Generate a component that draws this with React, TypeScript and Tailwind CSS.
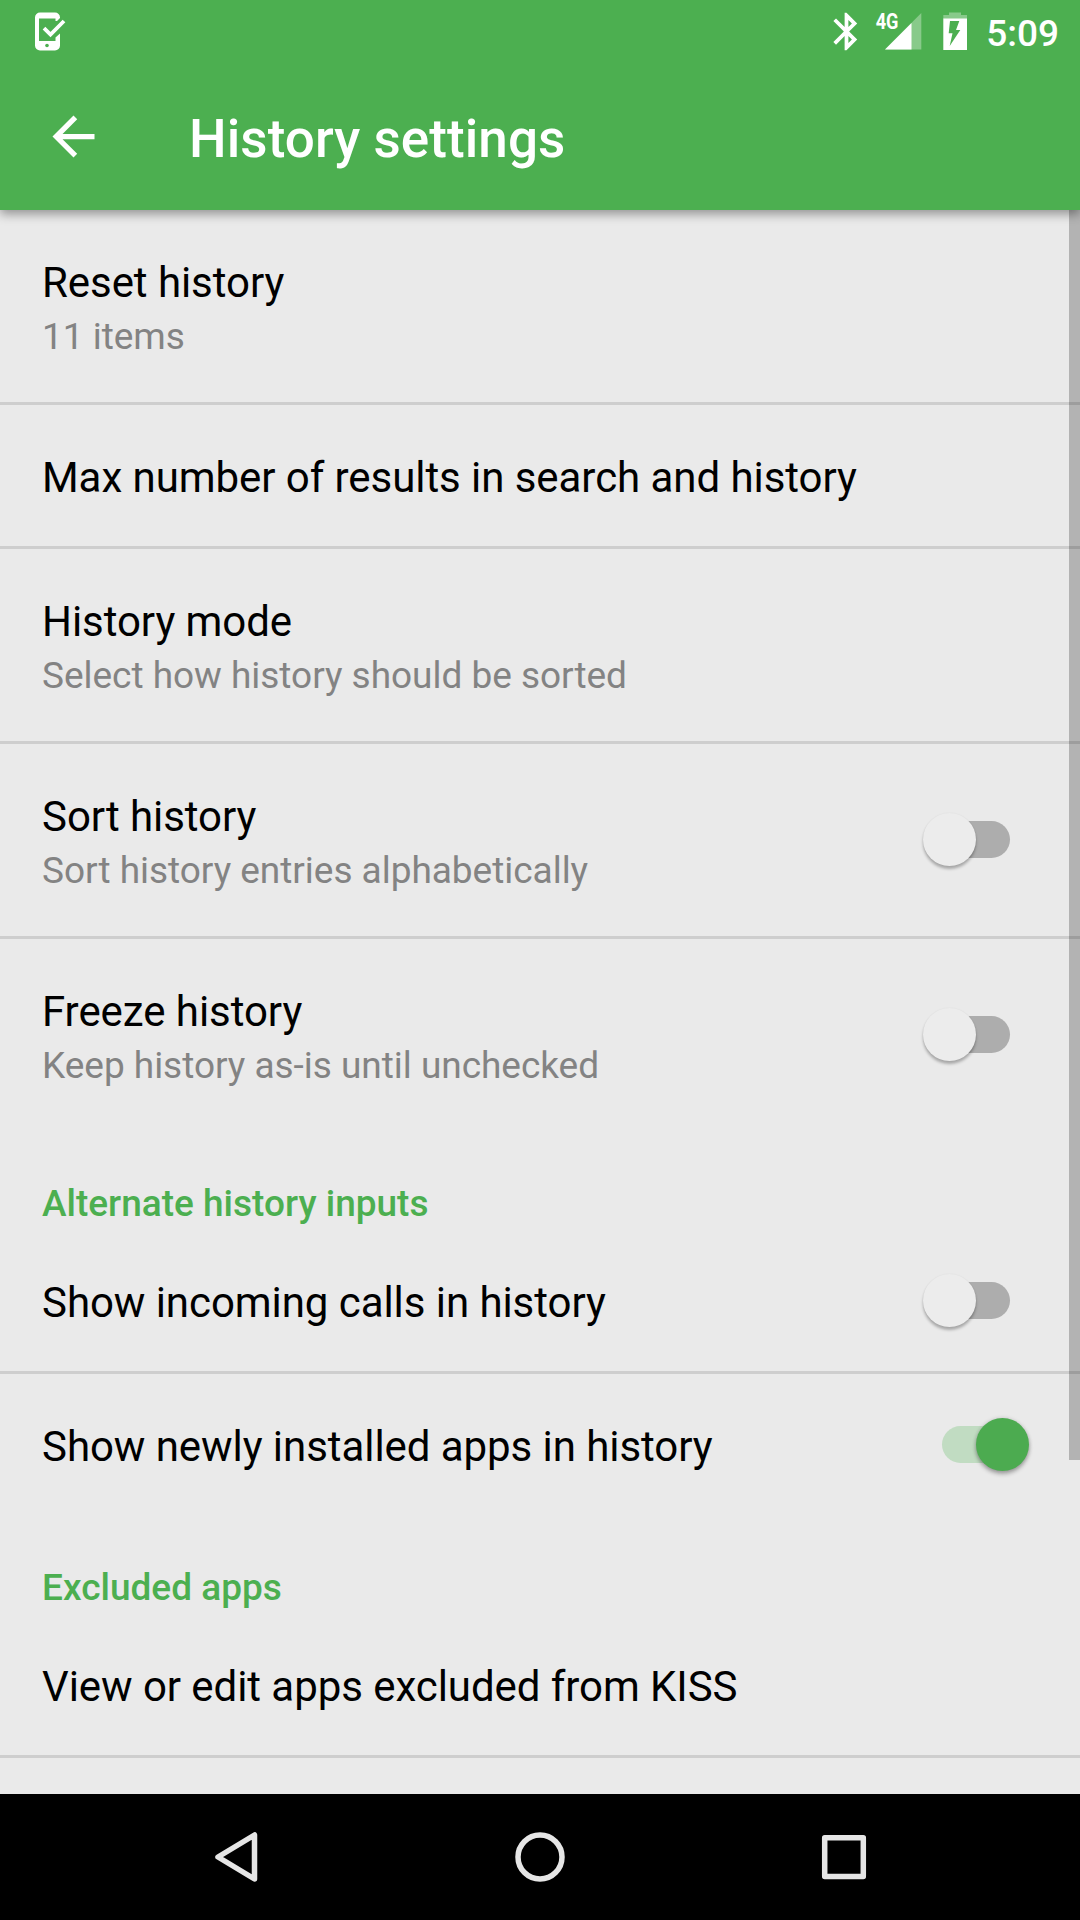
import React from "react";
import { MdArrowBack, MdBluetooth } from "react-icons/md";

function Switch({ on = false, raised = false }: { on?: boolean; raised?: boolean }) {
  return (
    <div className={`relative mr-[51px] h-[53px] w-[106px] shrink-0 ${raised ? "mb-[2px]" : ""}`}>
      <div className={`absolute left-[19px] top-[8px] h-[37px] w-[68px] rounded-full ${on ? "bg-[#c1dcc2]" : "bg-[#adadad]"}`} />
      <div
        className={`absolute top-0 h-[53px] w-[53px] rounded-full ${
          on
            ? "left-[53px] bg-[#4cab50] shadow-[0_3px_4px_rgba(0,0,0,0.3),0_0_4px_rgba(0,0,0,0.14)]"
            : "left-0 bg-[#ececec] shadow-[0_3px_3px_rgba(0,0,0,0.28),0_0_2px_rgba(0,0,0,0.06)]"
        }`}
      />
    </div>
  );
}

type RowProps = { title: string; summary?: string; toggle?: "on" | "off"; divider?: boolean };

function Row({ title, summary, toggle, divider = true }: RowProps) {
  return (
    <div className={divider ? "border-b-[3px] border-[#cecece]" : ""}>
      <div className={`flex items-center justify-between pl-[42px] ${summary ? "h-[192px]" : "h-[141px]"}`}>
        <div className="whitespace-nowrap pt-[4px]">
          <div className="text-[42px] leading-[56px] tracking-[-0.06px] text-black">{title}</div>
          {summary && <div className="-mb-px mt-px text-[37px] leading-[50px] tracking-[-0.03px] text-[#838383]">{summary}</div>}
        </div>
        {toggle && <Switch on={toggle === "on"} raised={!!summary} />}
      </div>
    </div>
  );
}

function Category({ children }: { children: React.ReactNode }) {
  return (
    <div className="flex h-[99px] items-end pb-px pl-[42px] text-[37px] font-medium leading-[50px] text-[#4caf50]">
      {children}
    </div>
  );
}

export default function App() {
  return (
    <div className="flex h-[1920px] w-[1080px] flex-col overflow-hidden bg-[#eaeaea] font-['Roboto',sans-serif]">
      <header className="relative z-10 h-[210px] shrink-0 bg-[#4caf50] text-white shadow-[0_4px_10px_rgba(0,0,0,0.38)]">
        <div className="flex h-[63px] items-center justify-between pl-[30px] pr-[21px]">
          <svg width="40" height="63" viewBox="30 0 40 63">
            <path
              d="M60 17.500a5 5 0 0 0-5-5H40a5 5 0 0 0-5 5v28a5 5 0 0 0 5 5h15a5 5 0 0 0 5-5V33.500L55.500 37.500V41H39V18.500H55.500V21H57L60 18Z"
              fill="white"
            />
            <circle cx="47" cy="45.500" r="1.800" fill="#4caf50" />
            <path d="M44 28.200L50.500 34.500L64 21" fill="none" stroke="white" strokeWidth="3.800" />
          </svg>
          <div className="flex h-[63px] items-center">
            <MdBluetooth className="h-[45px] w-[45px]" />
            <svg className="ml-[6px]" width="100" height="63" viewBox="875 0 100 63">
              <path d="M921.300 13V49.500H885Z" fill="#88ca8a" />
              <path d="M911.500 23V49.500H885Z" fill="white" />
              <text x="875.700" y="29.200" fontSize="22" fontWeight="700" textLength="22.800" lengthAdjust="spacingAndGlyphs" fill="white">4G</text>
              <path d="M943.300 19V15H949V12.500H961V15H967V19Z" fill="#88ca8a" />
              <path d="M943.300 18.500H967V50H943.300Z" fill="white" />
              <path d="M950 21H959.300L956 30H960.300L949.700 46L952.500 33.300H948.700Z" fill="#4caf50" />
            </svg>
            <span className="ml-[11px] mt-[5px] text-[37px] font-medium leading-[44px]">5:09</span>
          </div>
        </div>
        <div className="flex h-[147px] items-center pl-[42px]">
          <MdArrowBack className="h-[63px] w-[63px]" />
          <h1 className="ml-[84px] mt-[5px] text-[53px] font-medium leading-[64px] tracking-[0.08px]">History settings</h1>
        </div>
      </header>

      <main className="relative h-[1584px] shrink-0 overflow-hidden">
        <Row title="Reset history" summary="11 items" />
        <Row title="Max number of results in search and history" />
        <Row title="History mode" summary="Select how history should be sorted" />
        <Row title="Sort history" summary="Sort history entries alphabetically" toggle="off" />
        <Row title="Freeze history" summary="Keep history as-is until unchecked" toggle="off" divider={false} />
        <Category>Alternate history inputs</Category>
        <Row title="Show incoming calls in history" toggle="off" />
        <Row title="Show newly installed apps in history" toggle="on" divider={false} />
        <Category>Excluded apps</Category>
        <Row title="View or edit apps excluded from KISS" />
        <div className="absolute right-0 top-0 h-[1250px] w-[11px] bg-black/[0.235]" />
      </main>

      <nav className="flex h-[126px] shrink-0 items-center justify-between bg-black px-[206px]">
        <svg width="60" height="60" viewBox="206 1827 60 60" fill="none" stroke="#e6e6e6" strokeWidth="5.500" strokeLinejoin="round">
          <path d="M254.500 1835V1879L218 1857Z" />
        </svg>
        <svg width="60" height="60" viewBox="0 0 60 60" fill="none" stroke="#e6e6e6" strokeWidth="5.500">
          <circle cx="30" cy="30" r="22" />
        </svg>
        <svg width="60" height="60" viewBox="814 1827 60 60" fill="none" stroke="#e6e6e6" strokeWidth="5.500" strokeLinejoin="round">
          <rect x="824.700" y="1837.800" width="38.600" height="38.600" />
        </svg>
      </nav>
    </div>
  );
}
